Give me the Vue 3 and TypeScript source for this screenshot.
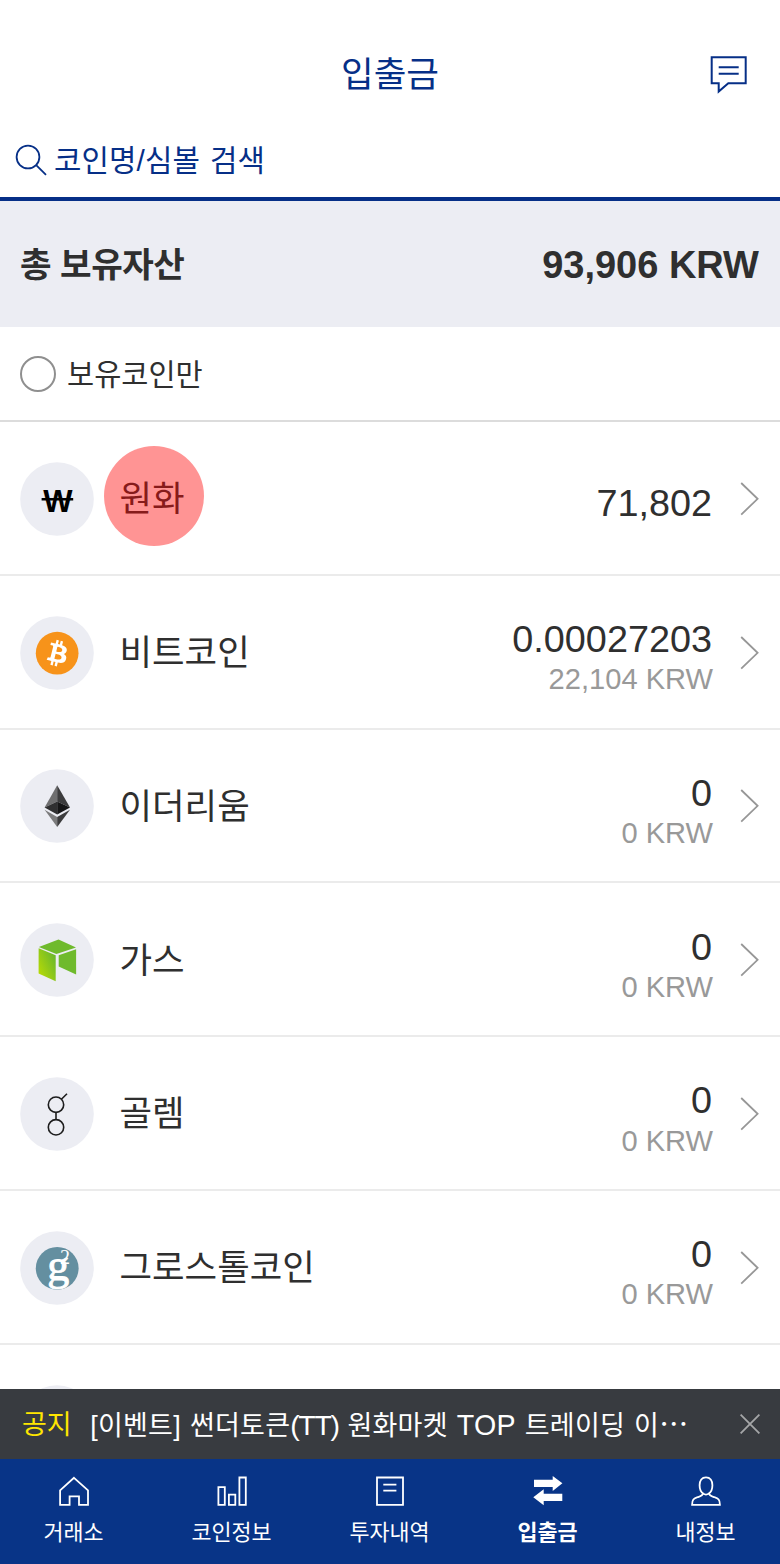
<script setup lang="ts">
interface Coin {
  id: string
  name: string
  amount: string
  krw?: string
  pressed?: boolean
}

interface Tab {
  id: string
  label: string
  active?: boolean
}

const coins: Coin[] = [
  { id: 'krw', name: '원화', amount: '71,802', pressed: true },
  { id: 'btc', name: '비트코인', amount: '0.00027203', krw: '22,104 KRW' },
  { id: 'eth', name: '이더리움', amount: '0', krw: '0 KRW' },
  { id: 'gas', name: '가스', amount: '0', krw: '0 KRW' },
  { id: 'gnt', name: '골렘', amount: '0', krw: '0 KRW' },
  { id: 'grs', name: '그로스톨코인', amount: '0', krw: '0 KRW' },
  { id: 'next', name: '', amount: '' },
]

const tabs: Tab[] = [
  { id: 'exchange', label: '거래소' },
  { id: 'info', label: '코인정보' },
  { id: 'history', label: '투자내역' },
  { id: 'transfer', label: '입출금', active: true },
  { id: 'me', label: '내정보' },
]
</script>

<template>
  <div class="screen">
    <header class="header">
      <h1 class="title">입출금</h1>
      <svg class="chat" viewBox="0 0 38 38" width="38" height="38">
        <path d="M1.7 1.3H35.7V27.3H18.3L8.7 35.6V27.3H1.7Z M8.7 11.3H28.7 M8.7 17.7H28.7" />
      </svg>
    </header>

    <div class="search">
      <svg class="lens" viewBox="0 0 32 32" width="32" height="32">
        <circle cx="13" cy="13" r="11.4" />
        <path d="M21.2 21.2L31 30.8" />
      </svg>
      <span class="search-text">코인명/심볼 검색</span>
    </div>

    <section class="summary">
      <span class="summary-label">총 보유자산</span>
      <span class="summary-value">93,906 KRW</span>
    </section>

    <label class="filter">
      <span class="radio"></span>
      <span class="filter-label">보유코인만</span>
    </label>

    <ul class="list">
      <li v-for="coin in coins" :key="coin.id" class="row">
        <svg class="coin" viewBox="0 0 74 74" width="74" height="74">
          <circle cx="37" cy="37" r="36.8" fill="#ecedf3" />
          <g v-if="coin.id === 'krw'">
            <text class="won" x="38" y="49.8" text-anchor="middle">W</text>
            <path d="M21.6 37.2H53.2" stroke="#000" stroke-width="2.4" />
          </g>
          <g v-else-if="coin.id === 'btc'" transform="translate(15.8 15.8) scale(1.335)">
            <circle cx="16" cy="16" r="16" fill="#f7931a" />
            <path
              fill="#fff"
              d="M23.189 14.02c.314-2.096-1.283-3.223-3.465-3.975l.708-2.84-1.728-.43-.69 2.765c-.454-.114-.92-.22-1.385-.326l.695-2.783L15.596 6l-.708 2.839c-.376-.086-.746-.17-1.104-.26l.002-.009-2.384-.595-.46 1.846s1.283.294 1.256.312c.7.175.826.638.805 1.006l-.806 3.235c.048.012.11.03.18.057l-.183-.045-1.13 4.532c-.086.212-.303.531-.793.41.018.025-1.256-.313-1.256-.313l-.858 1.978 2.25.561c.418.105.828.215 1.231.318l-.715 2.872 1.727.43.708-2.84c.472.127.93.245 1.378.357l-.706 2.828 1.728.43.715-2.866c2.948.558 5.164.333 6.097-2.333.752-2.146-.037-3.385-1.588-4.192 1.13-.26 1.98-1.003 2.207-2.538zm-3.95 5.538c-.533 2.147-4.148.986-5.32.695l.95-3.805c1.172.293 4.929.872 4.37 3.11zm.535-5.569c-.487 1.953-3.495.96-4.47.717l.86-3.45c.975.243 4.118.696 3.61 2.733z"
            />
          </g>
          <g v-else-if="coin.id === 'eth'">
            <path d="M37.2 16.3L24.6 38.5L37.2 32.6Z" fill="#6f6f70" />
            <path d="M37.2 16.3L50 38.5L37.2 32.6Z" fill="#3c3c3d" />
            <path d="M24.6 38.5L37.2 32.6V45.6Z" fill="#303031" />
            <path d="M50 38.5L37.2 32.6V45.6Z" fill="#161617" />
            <path d="M24.6 40.8L37.2 48V58Z" fill="#7b7b7c" />
            <path d="M50 40.8L37.2 48V58Z" fill="#3c3c3d" />
          </g>
          <g v-else-if="coin.id === 'gas'">
            <defs>
              <linearGradient id="gas-side" x1="0" y1="1" x2="0.9" y2="0.2">
                <stop offset="0" stop-color="#c1df00" />
                <stop offset="1" stop-color="#6cb82c" />
              </linearGradient>
            </defs>
            <path d="M18.9 24L38.5 16.6L56 24.6L36.4 31.1Z" fill="#6fba2c" />
            <path d="M18.6 25.3L35.7 32.2V58.2L18.6 50.4Z" fill="url(#gas-side)" />
            <path d="M38.7 32.2L56.1 26.2V51.6L38.7 43.4Z" fill="#6fba2c" />
          </g>
          <g v-else-if="coin.id === 'gnt'" fill="none" stroke="#1d1d1d" stroke-width="1.6">
            <circle cx="36" cy="27.7" r="7.7" />
            <circle cx="36" cy="50.3" r="7.7" />
            <path d="M36 35.4V42.6M41.4 22.3L47 16.7" />
          </g>
          <g v-else-if="coin.id === 'grs'">
            <clipPath id="grs-disc"><circle cx="37.2" cy="37.3" r="21.4" /></clipPath>
            <circle cx="37.2" cy="37.3" r="21.4" fill="#648fa0" />
            <g clip-path="url(#grs-disc)">
              <text class="grs-g" x="38.2" y="49" text-anchor="middle">g</text>
              <text class="grs-2" x="45" y="33.4" text-anchor="middle">2</text>
            </g>
          </g>
        </svg>
        <span class="name">
          {{ coin.name }}
          <i v-if="coin.pressed" class="touch"></i>
        </span>
        <span class="balance">
          <span class="amount">{{ coin.amount }}</span>
          <span v-if="coin.krw" class="krw">{{ coin.krw }}</span>
        </span>
        <svg class="chevron" viewBox="0 0 20 36" width="20" height="36">
          <path d="M1.2 2L17.6 17.8L1.2 33.6" />
        </svg>
      </li>
    </ul>

    <div class="notice">
      <span class="notice-tag">공지</span>
      <span class="notice-text">[이벤트] 썬더토큰<span class="ticker">(TT)</span> 원화마켓 <span class="latin">TOP</span> 트레이딩 이<span class="dots">⋯</span></span>
      <svg class="close" viewBox="0 0 20 20" width="20" height="20">
        <path d="M0.6 0.6L19.4 19.4M19.4 0.6L0.6 19.4" />
      </svg>
    </div>

    <nav class="tabs">
      <a v-for="tab in tabs" :key="tab.id" class="tab" :class="{ active: tab.active }">
        <svg class="tab-icon" viewBox="0 0 32 32" width="32" height="32">
          <path v-if="tab.id === 'exchange'" d="M16 2.8L30 15.4V29.8H21V21.4H11.6V29.8H2.1V15.4Z" />
          <path
            v-else-if="tab.id === 'info'"
            d="M2.4 12.1H8.8V29.8H2.4ZM12.9 19.6H19.3V29.8H12.9ZM23.4 2.5H29.8V29.8H23.4Z"
          />
          <path
            v-else-if="tab.id === 'history'"
            d="M3 2.5H29V29.8H3ZM9.3 9.7H22.4M9.3 15.7H22.4"
          />
          <path
            v-else-if="tab.id === 'transfer'"
            class="solid"
            d="M2 4.7H20.7V1L30.4 8.3L20.7 16V12H2ZM1.3 22.3L11.7 14.3V18.7H30.3V26H11.7V30.3Z"
          />
          <path
            v-else
            d="M16 2.3C11.8 2.3 9.6 5.4 9.6 10.2C9.6 14 11.4 17.2 13 18.4C12.8 20.8 11 21.2 7.6 22.2C3.6 23.3 2.1 24.8 2.1 29.8H29.9C29.9 24.8 28.4 23.3 24.4 22.2C21 21.2 19.2 20.8 19 18.4C20.6 17.2 22.4 14 22.4 10.2C22.4 5.4 20.2 2.3 16 2.3ZM13 18.4Q16 20.8 19 18.4"
          />
        </svg>
        <span>{{ tab.label }}</span>
      </a>
    </nav>
  </div>
</template>

<style>
body {
  margin: 0;
  background: #fff;
}
</style>

<style scoped>
.screen {
  box-sizing: border-box;
  width: 780px;
  height: 1564px;
  display: flex;
  flex-direction: column;
  overflow: hidden;
  background: #fff;
  color: #2f2f2f;
  font-family: 'Liberation Sans', 'Noto Sans CJK KR', sans-serif;
  line-height: 1;
}

.header {
  position: relative;
  flex: none;
  height: 120px;
  padding-top: 31px;
  box-sizing: border-box;
  display: flex;
  align-items: center;
  justify-content: center;
  color: #062f87;
}

.title {
  margin: 0;
  font-size: 35.5px;
  font-weight: 400;
}

.chat {
  position: absolute;
  right: 32px;
  top: 56px;
  fill: none;
  stroke: #062f87;
  stroke-width: 2;
}

.search {
  flex: none;
  box-sizing: border-box;
  height: 80.5px;
  padding: 3px 15px 0;
  border-bottom: 4px solid #062f87;
  display: flex;
  align-items: center;
  gap: 7px;
  color: #062f87;
  font-size: 29.8px;
}

.search-text {
  padding-top: 2px;
  letter-spacing: 0.1px;
  word-spacing: 1.6px;
}

.lens {
  fill: none;
  stroke: #062f87;
  stroke-width: 1.8;
}

.summary {
  flex: none;
  box-sizing: border-box;
  height: 126.5px;
  padding: 3px 21px 0 20px;
  display: flex;
  align-items: center;
  justify-content: space-between;
  background: #ecedf3;
  font-weight: 700;
}

.summary-label {
  font-size: 34.3px;
  letter-spacing: -0.5px;
}

.summary-value {
  font-size: 38px;
}

.filter {
  flex: none;
  box-sizing: border-box;
  height: 95px;
  padding: 0 20px;
  border-bottom: 2px solid #dcdcdc;
  display: flex;
  align-items: center;
  gap: 11px;
}

.radio {
  box-sizing: border-box;
  width: 36px;
  height: 36px;
  border: 2px solid #8f8f8f;
  border-radius: 50%;
}

.filter-label {
  padding-top: 2px;
  font-size: 29.5px;
}

.list {
  flex: 1;
  min-height: 0;
  margin: 0;
  padding: 0;
  list-style: none;
  overflow: hidden;
}

.row {
  box-sizing: border-box;
  height: 153.8px;
  padding: 2px 20px 0;
  border-bottom: 2px solid #ebebeb;
  display: flex;
  align-items: center;
}

.coin {
  flex: none;
}

.won {
  font: 700 31px 'Liberation Sans', sans-serif;
  fill: #000;
}

.grs-g {
  font: 400 44px 'Liberation Serif', serif;
  fill: #fff;
  stroke: #fff;
  stroke-width: 0.9;
}

.grs-2 {
  font: 400 20px 'Liberation Serif', serif;
  fill: #fff;
}

.name {
  position: relative;
  flex: 1;
  margin-left: 25.5px;
  padding-top: 2px;
  font-size: 35.4px;
}

.touch {
  position: absolute;
  left: -15.5px;
  top: 50%;
  width: 100px;
  height: 100px;
  margin-top: -53px;
  border-radius: 50%;
  background: rgba(255, 0, 0, 0.42);
}

.balance {
  display: flex;
  flex-direction: column;
  align-items: flex-end;
  padding-top: 10px;
  margin-right: 27px;
}

.amount {
  margin-right: 1px;
  font-size: 37.8px;
}

.krw {
  margin-top: 6.5px;
  font-size: 29.1px;
  color: #999;
}

.chevron {
  flex: none;
  fill: none;
  stroke: #979797;
  stroke-width: 1.8;
}

.notice {
  flex: none;
  height: 69.5px;
  padding: 0 20.5px 0 22px;
  display: flex;
  align-items: center;
  background: #383b40;
  color: #fff;
  font-size: 27px;
}

.notice-tag {
  padding-top: 3px;
  color: #ffe600;
}

.notice-text {
  flex: 1;
  margin-left: 18.5px;
  padding-top: 1px;
  white-space: nowrap;
  letter-spacing: 0.25px;
  word-spacing: 1.2px;
}

.ticker {
  font-size: 28.5px;
  letter-spacing: -1.4px;
}

.latin {
  font-size: 28.6px;
}

.dots {
  font-family: 'Noto Sans CJK KR', sans-serif;
  font-size: 29px;
  letter-spacing: 0;
}

.close {
  flex: none;
  fill: none;
  stroke: #a5a6a8;
  stroke-width: 1.8;
}

.tabs {
  flex: none;
  height: 105.5px;
  margin-left: -5.5px;
  display: grid;
  grid-template-columns: repeat(5, 158px);
  background: #083487;
  color: #fff;
}

.tab {
  padding-top: 16.5px;
  display: flex;
  flex-direction: column;
  align-items: center;
  gap: 15px;
  font-size: 21.8px;
}

.tab.active {
  font-weight: 700;
}

.tab-icon {
  fill: none;
  stroke: #fff;
  stroke-width: 1.8;
}

.solid {
  fill: #fff;
  stroke: none;
}
</style>
